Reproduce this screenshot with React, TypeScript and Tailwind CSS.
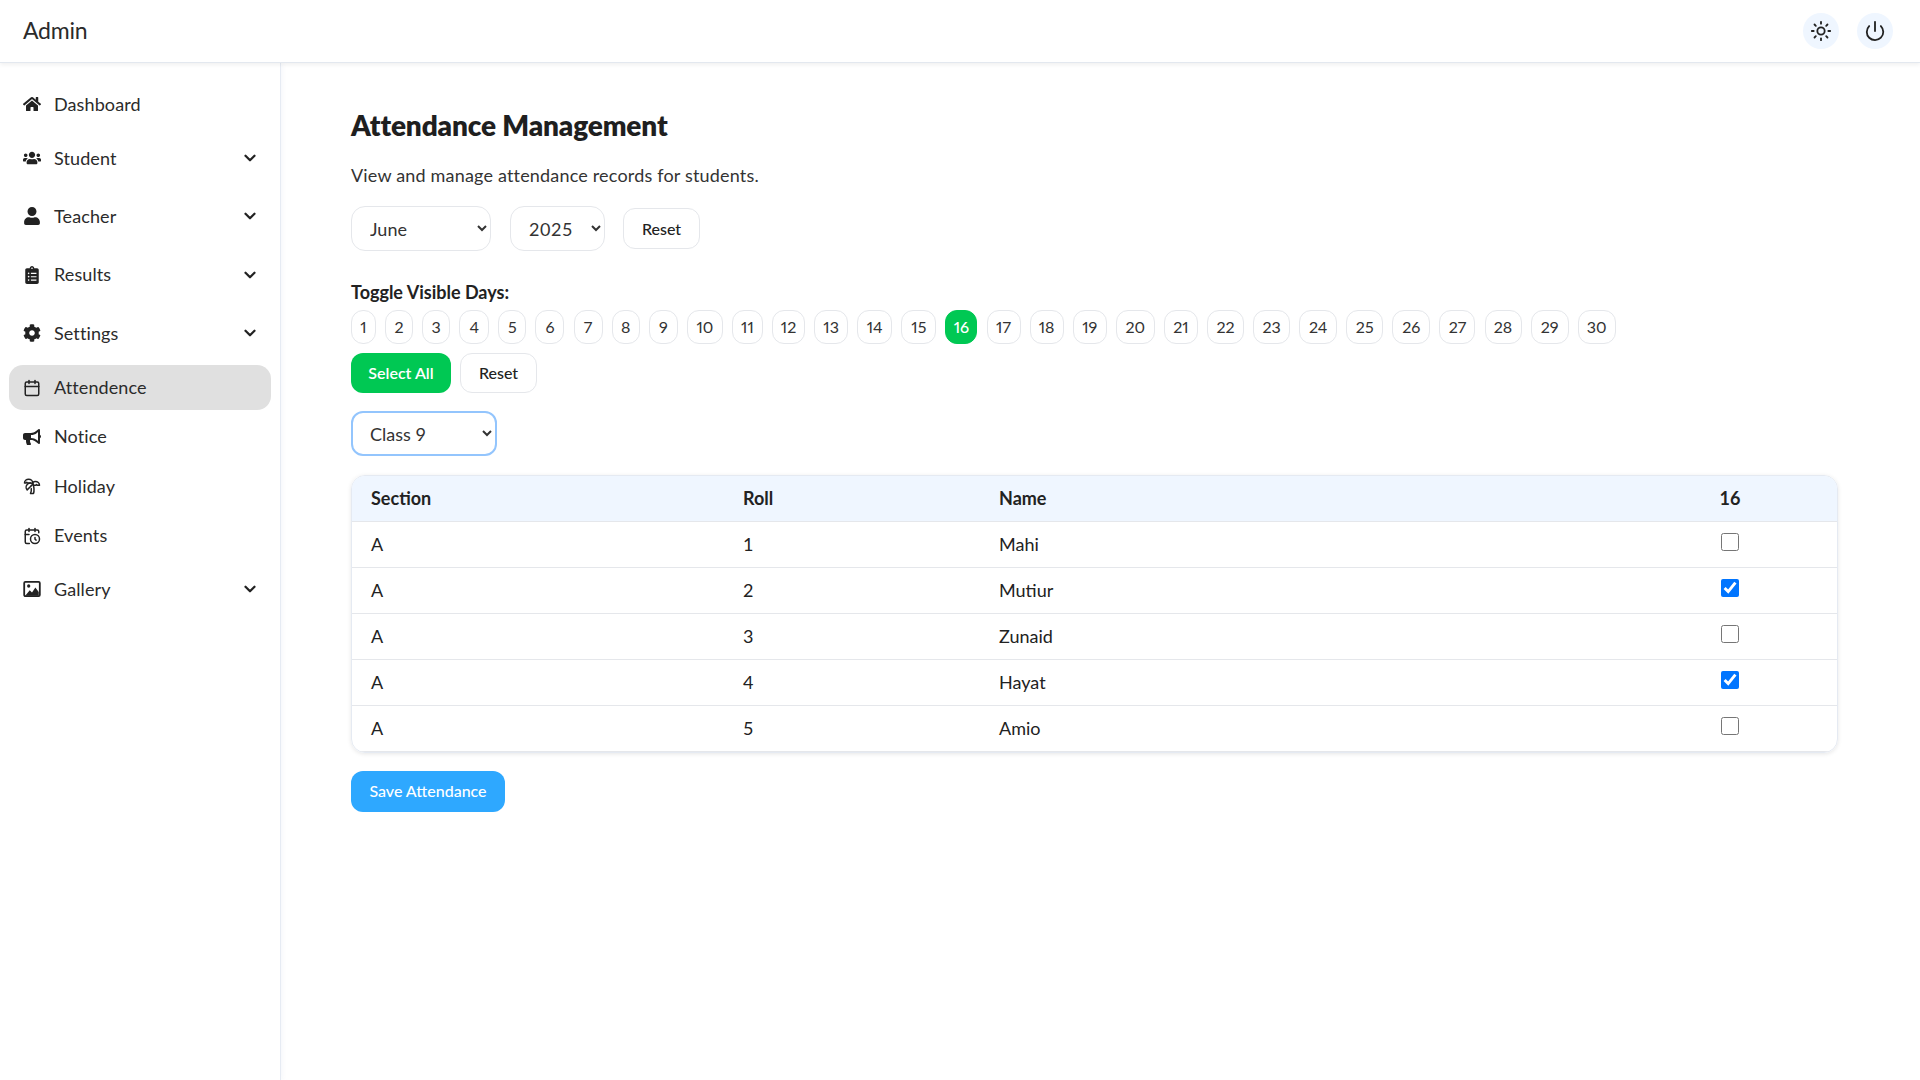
import React from 'react'
import { FaHome, FaUsers, FaUser, FaClipboardList, FaCog, FaBullhorn } from 'react-icons/fa'
import { LuCalendar, LuTreePalm, LuCalendarClock, LuChevronDown, LuPower, LuSun } from 'react-icons/lu'

const GalleryIcon = ({ className }: { className?: string }) => (
  <svg viewBox="0 0 24 24" width="1em" height="1em" className={className}>
    <rect x="1.6" y="2.4" width="20.8" height="19.2" rx="1.6" fill="none" stroke="currentColor" strokeWidth="2.4" />
    <circle cx="7.6" cy="8" r="2.2" fill="currentColor" />
    <path d="M3 21 L9 13.5 L12 16.5 L16.5 10 L21 16 V21 Z" fill="currentColor" />
  </svg>
)

const navItems = [
  { label: 'Dashboard', icon: FaHome, cls: 'h-[54px] mt-[14px]' },
  { label: 'Student', icon: FaUsers, arrow: true, cls: 'h-[54px]' },
  { label: 'Teacher', icon: FaUser, arrow: true, cls: 'h-[60px] mt-[1px]' },
  { label: 'Results', icon: FaClipboardList, arrow: true, cls: 'h-[57px]' },
  { label: 'Settings', icon: FaCog, arrow: true, cls: 'h-[60px]' },
  { label: 'Attendence', icon: LuCalendar, active: true, cls: 'h-[45px] mt-[2px]' },
  { label: 'Notice', icon: FaBullhorn, cls: 'h-[49px] mt-[2px]' },
  { label: 'Holiday', icon: LuTreePalm, cls: 'h-[50px]' },
  { label: 'Events', icon: LuCalendarClock, cls: 'h-[49px]' },
  { label: 'Gallery', icon: GalleryIcon, arrow: true, cls: 'h-[58px]' },
]

// pill widths differ per number in the design font
const dayPills = [
  { day: 1, w: 'w-[25px]' }, { day: 2, w: 'w-[28px]' }, { day: 3, w: 'w-[28px]' }, { day: 4, w: 'w-[30px]' },
  { day: 5, w: 'w-[28px]' }, { day: 6, w: 'w-[29px]' }, { day: 7, w: 'w-[29px]' }, { day: 8, w: 'w-[28px]' },
  { day: 9, w: 'w-[29px]' }, { day: 10, w: 'w-[36px]' }, { day: 11, w: 'w-[31px]' }, { day: 12, w: 'w-[33px]' },
  { day: 13, w: 'w-[34px]' }, { day: 14, w: 'w-[35px]' }, { day: 15, w: 'w-[35px]' }, { day: 16, w: 'w-[32px]' },
  { day: 17, w: 'w-[34px]' }, { day: 18, w: 'w-[34px]' }, { day: 19, w: 'w-[34px]' }, { day: 20, w: 'w-[39px]' },
  { day: 21, w: 'w-[34px]' }, { day: 22, w: 'w-[37px]' }, { day: 23, w: 'w-[37px]' }, { day: 24, w: 'w-[38px]' },
  { day: 25, w: 'w-[37px]' }, { day: 26, w: 'w-[38px]' }, { day: 27, w: 'w-[36px]' }, { day: 28, w: 'w-[37px]' },
  { day: 29, w: 'w-[38px]' }, { day: 30, w: 'w-[38px]' },
]

const students = [
  { section: 'A', roll: 1, name: 'Mahi', present: false },
  { section: 'A', roll: 2, name: 'Mutiur', present: true },
  { section: 'A', roll: 3, name: 'Zunaid', present: false },
  { section: 'A', roll: 4, name: 'Hayat', present: true },
  { section: 'A', roll: 5, name: 'Amio', present: false },
]

const Sidebar = () => (
  <aside className="w-[281px] shrink-0 border-r border-[#e6ebf3] bg-white shadow-[2px_0_4px_rgba(200,210,230,0.15)]">
    <ul>
      {navItems.map((item) => (
        <li
          key={item.label}
          className={`${item.cls} mx-[9px] w-[262px] flex items-center pl-[14px] pr-[12px] rounded-[14px] ${item.active ? 'bg-[#e0e0e0]' : ''}`}
        >
          <item.icon className="text-[18px] text-[#222] shrink-0" />
          <span className="ml-[13px] text-[18px] tracking-[0.1px] text-[#2b2b2b]">{item.label}</span>
          {item.arrow && <LuChevronDown className="ml-auto text-[18px] text-[#222]" strokeWidth={3} />}
        </li>
      ))}
    </ul>
  </aside>
)

const App = () => {
  return (
    <div className="min-h-[1080px] bg-white text-[#222] font-['Lato','Noto_Sans',sans-serif]">
      <header className="h-[63px] flex items-center justify-between pl-[23px] pr-[27px] bg-white border-b border-[#e3e8ef] shadow-[0_2px_4px_rgba(0,0,0,0.06)] relative z-10">
        <div className="text-[23px] -mt-[1px] tracking-[-0.2px] text-[#2b2b2b]">Admin</div>
        <div className="flex items-center gap-[18px]">
          <button className="size-9 rounded-full bg-[#eff6ff] flex items-center justify-center"><LuSun className="text-[22px]" /></button>
          <button className="size-9 rounded-full bg-[#eff6ff] flex items-center justify-center"><LuPower className="text-[22px]" /></button>
        </div>
      </header>
      <div className="flex min-h-[1017px]">
        <Sidebar />
        <main className="flex-1 pl-[70px] pr-[82px] pt-[44px]">
          <h1 className="text-[28px] leading-[36px] font-extrabold tracking-[-0.15px] text-[#1f1f1f]">Attendance Management</h1>
          <p className="mt-[19px] text-[18px] leading-[26px] tracking-[0.18px] text-[#333]">View and manage attendance records for students.</p>
          <div className="mt-[18px] flex items-center">
            <select defaultValue="June" className="w-[140px] h-[45px] pl-[14px] text-[18px] rounded-[14px] border border-[#e5e7eb] bg-white text-[#333]">
              <option>June</option>
            </select>
            <select defaultValue="2025" className="ml-[19px] w-[95px] h-[45px] pl-[14px] text-[18px] tracking-[0.6px] rounded-[14px] border border-[#e5e7eb] bg-white text-[#333]">
              <option>2025</option>
            </select>
            <button className="ml-[18px] w-[77px] h-[41px] text-[16px] font-medium rounded-[12px] border border-[#e5e7eb] bg-white">Reset</button>
          </div>
          <div className="mt-[29px] text-[18px] leading-[24px] font-bold">Toggle Visible Days:</div>
          <div className="mt-[6px] flex gap-[9.1px]">
            {dayPills.map((p) => (
              <button key={p.day} className={`${p.w} h-[34px] text-[16px] proportional-nums rounded-[12px] border ${p.day === 16 ? 'bg-[#00c853] border-[#00c853] text-white font-medium' : 'bg-white border-[#e5e7eb] text-[#333]'}`}>{p.day}</button>
            ))}
          </div>
          <div className="mt-[9px] flex gap-[9px]">
            <button className="w-[100px] h-[40px] rounded-[12px] bg-[#00c853] text-white text-[16px] font-semibold">Select All</button>
            <button className="w-[77px] h-[40px] rounded-[12px] border border-[#e5e7eb] bg-white text-[16px] font-medium">Reset</button>
          </div>
          <select defaultValue="Class 9" className="mt-[18px] block w-[146px] h-[45px] pl-[13px] text-[18px] rounded-[12px] border-2 border-[#93c5fd] bg-white text-[#333]">
            <option>Class 9</option>
          </select>
          <div className="mt-[19px] rounded-[14px] border border-[#e5eaf2] shadow-[0_1px_4px_rgba(0,0,0,0.1)] overflow-hidden">
            <table className="w-full table-fixed border-collapse text-left">
              <colgroup>
                <col className="w-[372px]" />
                <col className="w-[256px]" />
                <col />
                <col className="w-[214px]" />
              </colgroup>
              <thead>
                <tr className="h-[45px] bg-[#eff6ff] border-b border-[#e5e7eb]">
                  <th className="pl-[19px] text-[18px] font-bold">Section</th>
                  <th className="pl-[19px] text-[18px] font-bold">Roll</th>
                  <th className="pl-[19px] text-[18px] font-bold">Name</th>
                  <th className="text-center text-[18px] font-bold">16</th>
                </tr>
              </thead>
              <tbody>
                {students.map((s) => (
                  <tr key={s.roll} className="h-[46px] border-b border-[#e5e7eb]">
                    <td className="pl-[19px] text-[18px]">{s.section}</td>
                    <td className="pl-[19px] text-[18px]">{s.roll}</td>
                    <td className="pl-[19px] text-[18px]">{s.name}</td>
                    <td className="text-center"><input type="checkbox" defaultChecked={s.present} className="size-[18px] translate-y-[1px]" /></td>
                  </tr>
                ))}
              </tbody>
            </table>
          </div>
          <button className="mt-[18px] w-[154px] h-[41px] rounded-[12px] bg-[#2ea8ff] text-white text-[16px] font-medium">Save Attendance</button>
        </main>
      </div>
    </div>
  )
}

export default App
